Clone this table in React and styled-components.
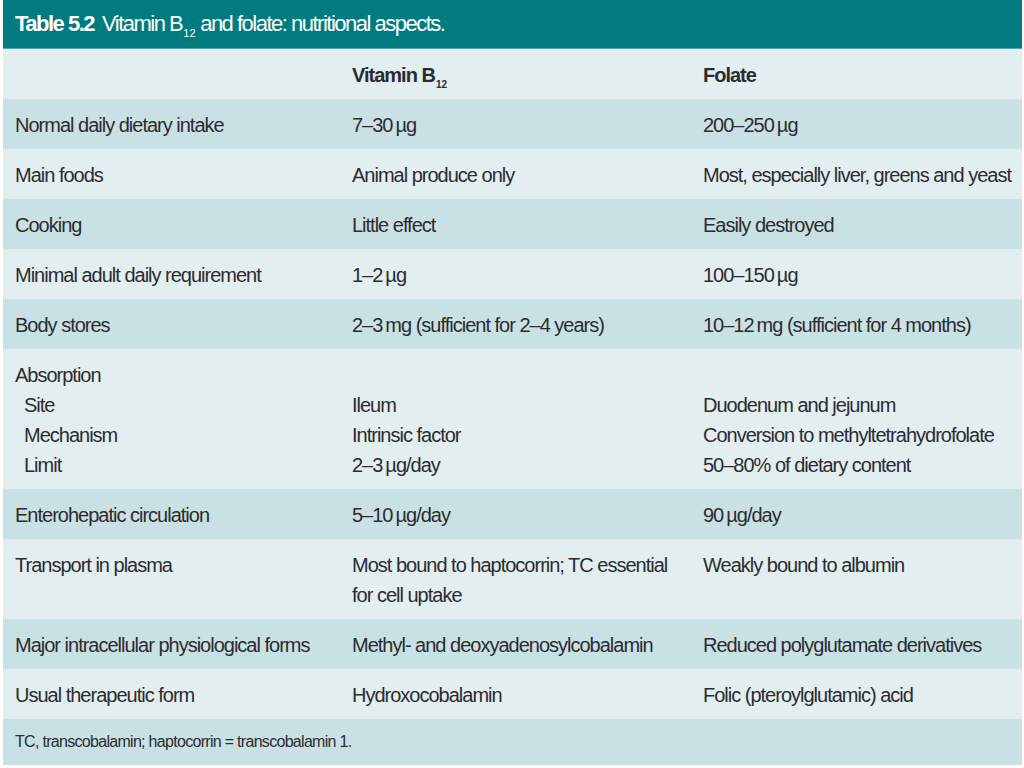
import React from "react";
import styled, { createGlobalStyle } from "styled-components";

const GlobalStyle = createGlobalStyle`
  html, body {
    margin: 0;
    padding: 0;
    background: #ffffff;
  }
  body {
    font-family: "Liberation Sans", Arial, sans-serif;
    color: #2c2c30;
  }
`;

const Page = styled.div`
  width: 1024px;
  height: 768px;
  padding-left: 3px;
  padding-right: 2px;
  box-sizing: border-box;
  overflow: hidden;
`;

const TitleBar = styled.div`
  height: 49px;
  background: #007b80;
  color: #ffffff;
  display: flex;
  align-items: center;
  padding-left: 12px;
  font-size: 22px;
  letter-spacing: -1.5px;
  border-bottom: 1px solid #5aa5a8;
  box-sizing: border-box;
`;

const TitleNum = styled.span`
  font-weight: bold;
  margin-right: 8px;
`;

const Sub = styled.sub`
  font-size: 0.5em;
  vertical-align: -0.55em;
  line-height: 0;
  margin-left: 1px;
  letter-spacing: 0;
`;

const Row = styled.div`
  display: grid;
  grid-template-columns: 337px 351px 1fr;
  background: ${(p) => (p.$dark ? "#c9e1e4" : "#e3eef0")};
  padding: 11px 0 9px;
  font-size: 20px;
  line-height: 30px;
  letter-spacing: -1px;
  font-weight: ${(p) => (p.$head ? "bold" : "normal")};
`;

const Cell = styled.div`
  padding-left: 12px;
  padding-right: 4px;
`;

const Line = styled.div`
  padding-left: ${(p) => (p.$indent ? "9px" : "0")};
  white-space: nowrap;
`;

const Footnote = styled.div`
  background: #c9e1e4;
  height: 46px;
  display: flex;
  align-items: center;
  padding-left: 12px;
  font-size: 16px;
  letter-spacing: -0.7px;
`;

const rows = [
  ["Normal daily dietary intake", "7–30\u2009µg", "200–250\u2009µg"],
  ["Main foods", "Animal produce only", "Most, especially liver, greens and yeast"],
  ["Cooking", "Little effect", "Easily destroyed"],
  ["Minimal adult daily requirement", "1–2\u2009µg", "100–150\u2009µg"],
  ["Body stores", "2–3\u2009mg (sufficient for 2–4 years)", "10–12\u2009mg (sufficient for 4 months)"],
  [
    ["Absorption", "Site", "Mechanism", "Limit"],
    ["", "Ileum", "Intrinsic factor", "2–3\u2009µg/day"],
    ["", "Duodenum and jejunum", "Conversion to methyltetrahydrofolate", "50–80% of dietary content"],
  ],
  ["Enterohepatic circulation", "5–10\u2009µg/day", "90\u2009µg/day"],
  [
    ["Transport in plasma"],
    ["Most bound to haptocorrin; TC essential", "for cell uptake"],
    ["Weakly bound to albumin"],
  ],
  ["Major intracellular physiological forms", "Methyl- and deoxyadenosylcobalamin", "Reduced polyglutamate derivatives"],
  ["Usual therapeutic form", "Hydroxocobalamin", "Folic (pteroylglutamic) acid"],
];

function renderCell(value, col) {
  const lines = Array.isArray(value) ? value : [value];
  return (
    <Cell key={col}>
      {lines.map((l, i) => (
        <Line key={i} $indent={col === 0 && i > 0 && lines.length > 2}>
          {l || "\u00a0"}
        </Line>
      ))}
    </Cell>
  );
}

export default function App() {
  return (
    <>
      <GlobalStyle />
      <Page>
        <TitleBar>
          <TitleNum>Table 5.2</TitleNum>
          <span>
            Vitamin B<Sub>12</Sub> and folate: nutritional aspects.
          </span>
        </TitleBar>
        <Row $head>
          <Cell />
          <Cell>
            Vitamin B<Sub>12</Sub>
          </Cell>
          <Cell>Folate</Cell>
        </Row>
        {rows.map((r, i) => (
          <Row key={i} $dark={i % 2 === 0}>
            {r.map((c, j) => renderCell(c, j))}
          </Row>
        ))}
        <Footnote>TC, transcobalamin; haptocorrin = transcobalamin 1.</Footnote>
      </Page>
    </>
  );
}
